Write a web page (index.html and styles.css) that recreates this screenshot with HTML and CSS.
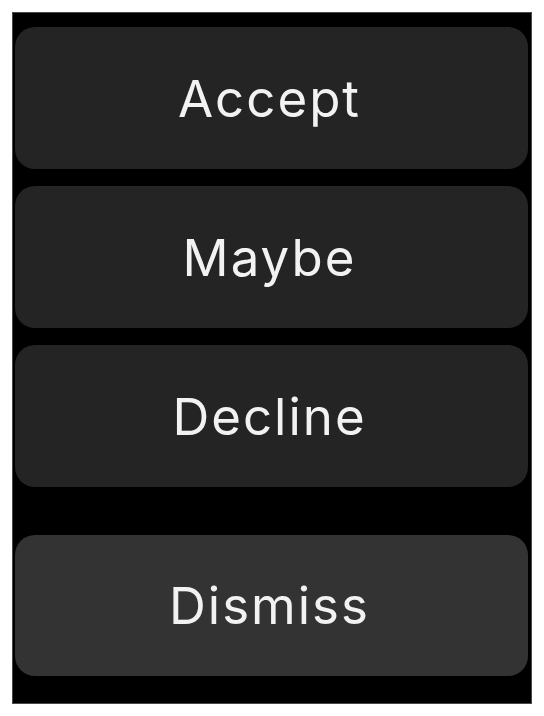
FILE: index.html
```html
<!DOCTYPE html>
<html>
<head>
<meta charset="utf-8">
<link rel="stylesheet" href="styles.css">
</head>
<body>
<div class="screen">
  <div class="actions">
    <button class="btn">Accept</button>
    <button class="btn">Maybe</button>
    <button class="btn">Decline</button>
  </div>
  <button class="btn btn-dismiss">Dismiss</button>
</div>
</body>
</html>
```
FILE: styles.css
```css
html, body {
  margin: 0;
  padding: 0;
  background: #ffffff;
}
.screen {
  box-sizing: border-box;
  margin: 12px;
  width: 520px;
  height: 692px;
  background: #000000;
  border: 1px solid #4a4a4a;
  padding: 14px 3px 0 2px;
  display: flex;
  flex-direction: column;
}
.actions {
  display: flex;
  flex-direction: column;
  gap: 17px;
}
.btn {
  box-sizing: border-box;
  width: 513px;
  height: 142px;
  border: none;
  border-radius: 20px;
  background: #242424;
  color: #f2f2f2;
  font-family: Inter, "Noto Sans", sans-serif;
  font-size: 51px;
  font-weight: 400;
  letter-spacing: 2px;
  display: flex;
  align-items: center;
  justify-content: center;
  padding: 0 4px 0 0;
}
.btn-dismiss {
  margin-top: 48px;
  height: 141px;
  background: #333333;
}
```
